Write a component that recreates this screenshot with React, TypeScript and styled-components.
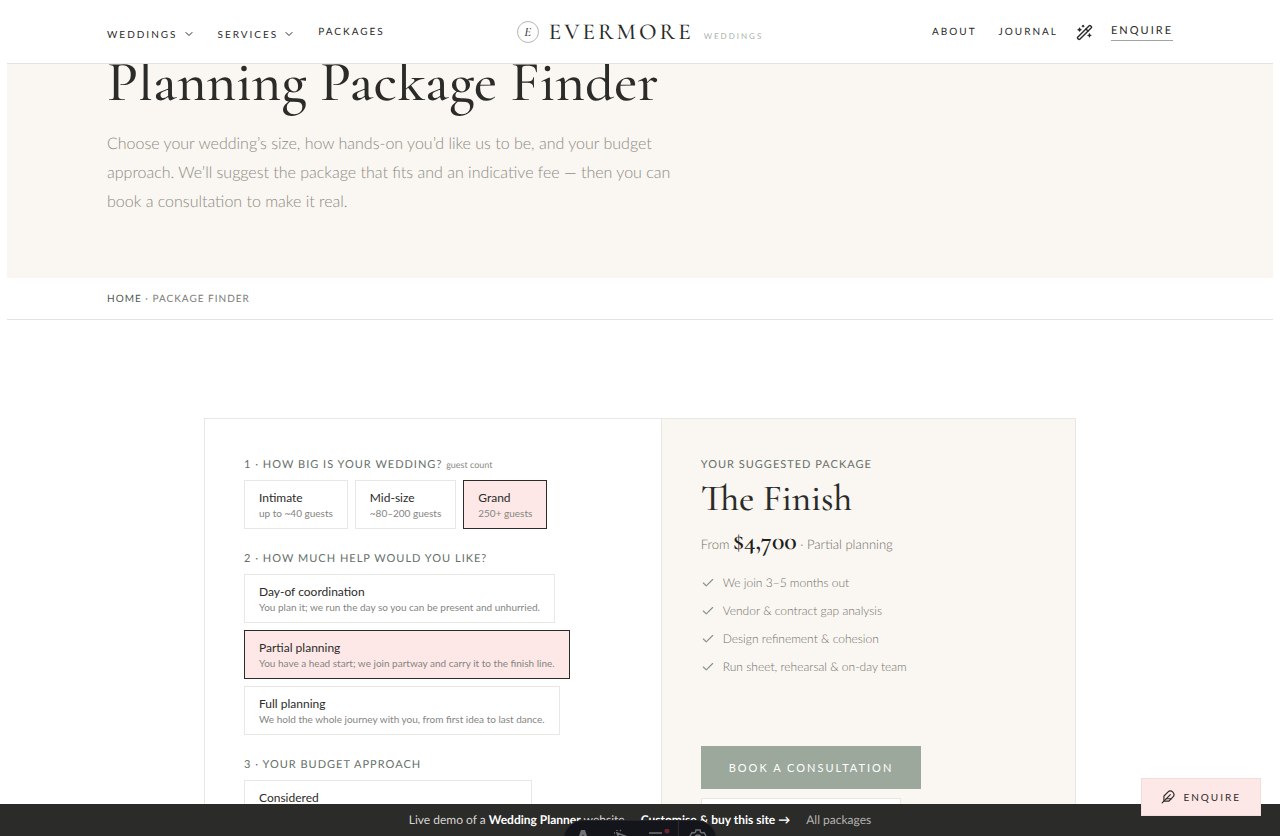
import React, { useState } from "react";
import styled, { createGlobalStyle } from "styled-components";
import { Check, ChevronDown, Feather, WandSparkles } from "lucide-react";

const ink = "#2b2b29";
const muted = "#8b8b84";
const cream = "#faf6f1";
const blush = "#fde8e7";
const sage = "#9ca89c";
const line = "#e9e7e3";
const serif = `"Cormorant Garamond", "Liberation Serif", serif`;

const GlobalStyle = createGlobalStyle`
  *, *::before, *::after { box-sizing: border-box; }
  body {
    margin: 0;
    background: #fff;
    color: ${ink};
    font-family: Lato, "Liberation Sans", sans-serif;
    font-size: 13px;
    text-rendering: geometricPrecision;
  }
  button { font: inherit; color: inherit; cursor: pointer; }
  a { color: inherit; text-decoration: none; }
  h1, h2, p, ul { margin: 0; padding: 0; }
`;

const Page = styled.div`
  height: 100vh;
  overflow: hidden;
  padding: 0 7px;
`;

const Header = styled.header`
  position: fixed;
  z-index: 10;
  top: 0;
  left: 7px;
  right: 7px;
  height: 64px;
  padding: 0 100px;
  display: grid;
  grid-template-columns: 1fr auto 1fr;
  align-items: center;
  background: #fff;
  border-bottom: 1px solid #e3e3e1;
`;

const Nav = styled.nav<{ $end?: boolean }>`
  display: flex;
  align-items: center;
  justify-content: ${(p) => (p.$end ? "flex-end" : "flex-start")};
  gap: ${(p) => (p.$end ? 18 : 23)}px;
  padding-top: 1px;
  font-size: 10px;
  line-height: 16px;
  letter-spacing: 2px;
`;

const MenuButton = styled.button`
  display: flex;
  align-items: center;
  gap: 5px;
  padding: 3px 0 0;
  border: 0;
  background: none;
  letter-spacing: inherit;
`;

const NavLink = styled.a`
  & + & {
    margin-left: 4px;
  }
`;

const IconButton = styled.button`
  display: flex;
  padding: 0;
  border: 0;
  background: none;
`;

const EnquireLink = styled.a`
  border-bottom: 1px solid ${sage};
  padding-bottom: 1px;
  font-size: 11px;
`;

const Brand = styled.a`
  display: flex;
  align-items: center;
  gap: 10px;
`;

const Monogram = styled.span`
  display: grid;
  place-items: center;
  width: 22px;
  height: 22px;
  border: 1px solid #b5b8b3;
  border-radius: 50%;
  font: italic 500 13px/20px ${serif};
`;

const Wordmark = styled.span`
  font: 500 23px/28px ${serif};
  letter-spacing: 3px;
`;

const BrandTag = styled.span`
  padding-top: 8px;
  font-size: 8px;
  letter-spacing: 2px;
  color: #a9b3ab;
`;

const Hero = styled.section`
  height: 278px;
  padding: 51px 100px 0;
  background: ${cream};
`;

const Title = styled.h1`
  font: 500 57px/64px ${serif};
`;

const Intro = styled.p`
  max-width: 580px;
  margin-top: 14px;
  font-size: 16px;
  line-height: 29px;
  font-weight: 300;
  color: ${muted};
`;

const Breadcrumb = styled.nav`
  padding: 2px 100px 0;
  border-bottom: 1px solid #e3e3e1;
  font-size: 10px;
  line-height: 39px;
  letter-spacing: 1px;
  color: #7b7d77;
  text-transform: uppercase;

  a {
    color: #4f5a52;
  }
`;

const Finder = styled.main`
  width: calc(100% - 48px);
  max-width: 872px;
  margin: 98px auto 0;
  display: grid;
  grid-template-columns: 11fr 10fr;
  border: 1px solid ${line};
`;

const Questions = styled.div`
  padding: 37px 39px;
`;

const Question = styled.section`
  margin-bottom: 21px;
`;

const Label = styled.h2`
  margin-bottom: 6px;
  font-size: 11px;
  font-weight: 400;
  line-height: 18px;
  letter-spacing: 1px;
  color: #66706a;

  small {
    font-size: 9px;
    letter-spacing: 0;
    color: ${muted};
  }
`;

const Options = styled.div<{ $column?: boolean }>`
  display: flex;
  flex-direction: ${(p) => (p.$column ? "column" : "row")};
  align-items: flex-start;
  gap: 7px;
`;

const Option = styled.button<{ $minWidth?: number }>`
  display: flex;
  flex-direction: column;
  min-width: ${(p) => p.$minWidth ?? 0}px;
  min-height: 49px;
  padding: 8px 14px;
  border: 1px solid ${line};
  background: #fff;
  text-align: left;
  white-space: nowrap;

  &[aria-pressed="true"] {
    border-color: ${ink};
    background: ${blush};
  }
`;

const OptionName = styled.span`
  font-size: 12px;
  line-height: 18px;
`;

const OptionNote = styled.span`
  font-size: 10px;
  line-height: 13px;
  color: #85857f;
`;

const Result = styled.aside`
  padding: 37px 39px;
  background: ${cream};
  border-left: 1px solid ${line};
`;

const ResultLabel = styled.p`
  font-size: 11px;
  line-height: 18px;
  letter-spacing: 1px;
  color: #66706a;
`;

const PackageName = styled.h2`
  margin-top: 4px;
  font: 500 37px/42px ${serif};
`;

const Price = styled.p`
  margin-top: 7px;
  font-size: 13px;
  line-height: 30px;
  font-weight: 300;
  color: #70706a;

  strong {
    font: 600 26px/30px ${serif};
    color: #1e1e1c;
  }
`;

const Features = styled.ul`
  margin-top: 10px;
  list-style: none;

  li {
    display: flex;
    align-items: center;
    gap: 8px;
    font-size: 12px;
    line-height: 28px;
    font-weight: 300;
    color: #70706a;
  }

  svg {
    color: #87948a;
  }
`;

const BookButton = styled.button`
  display: block;
  height: 43px;
  margin-top: 65px;
  padding: 0 28px;
  border: 0;
  background: ${sage};
  color: #fff;
  font-size: 11px;
  letter-spacing: 2px;
`;

const SecondaryLink = styled.a`
  display: block;
  width: 200px;
  height: 43px;
  margin-top: 9px;
  border: 1px solid ${line};
  background: #fff;
`;

const DemoBar = styled.footer`
  position: fixed;
  z-index: 10;
  left: 0;
  right: 0;
  bottom: 0;
  display: flex;
  justify-content: center;
  gap: 16px;
  background: ${ink};
  color: #d6d4d0;
  font-size: 12px;
  line-height: 32px;

  strong,
  a:first-of-type {
    font-weight: 700;
    color: #fff;
  }

  a:last-of-type {
    color: #b3b2ae;
  }
`;

const FloatingEnquire = styled.button`
  position: fixed;
  z-index: 20;
  right: 19px;
  bottom: 20px;
  display: flex;
  align-items: center;
  gap: 8px;
  height: 38px;
  padding: 0 19px;
  border: 1px solid #f3dcda;
  background: ${blush};
  font-size: 10px;
  letter-spacing: 2px;
`;

const DevToolbar = styled.div`
  position: fixed;
  z-index: 30;
  left: 50%;
  bottom: -24px;
  transform: translateX(-50%);
  display: flex;
  height: 40px;
  overflow: hidden;
  border: 1px solid #23252c;
  border-radius: 20px;
  background: #13151a;
  color: #6f7177;
`;

const ToolButton = styled.button`
  display: flex;
  justify-content: center;
  width: 38px;
  padding: 8px 0 0;
  border: 0;
  background: none;

  &:last-child {
    border-left: 1px solid #2b2d34;
  }
`;

type Choice = { name: string; note?: string; minWidth?: number };

const sizes: Choice[] = [
  { name: "Intimate", note: "up to ~40 guests" },
  { name: "Mid-size", note: "~80–200 guests" },
  { name: "Grand", note: "250+ guests" },
];

const help: Choice[] = [
  {
    name: "Day-of coordination",
    note: "You plan it; we run the day so you can be present and unhurried.",
  },
  {
    name: "Partial planning",
    note: "You have a head start; we join partway and carry it to the finish line.",
  },
  {
    name: "Full planning",
    note: "We hold the whole journey with you, from first idea to last dance.",
  },
];

const budgets: Choice[] = [{ name: "Considered", minWidth: 288 }];

const features = [
  "We join 3–5 months out",
  "Vendor & contract gap analysis",
  "Design refinement & cohesion",
  "Run sheet, rehearsal & on-day team",
];

function ChoiceGroup({
  choices,
  initial,
  column,
}: {
  choices: Choice[];
  initial: string;
  column?: boolean;
}) {
  const [value, setValue] = useState(initial);
  return (
    <Options $column={column}>
      {choices.map((c) => (
        <Option
          key={c.name}
          type="button"
          $minWidth={c.minWidth}
          aria-pressed={value === c.name}
          onClick={() => setValue(c.name)}
        >
          <OptionName>{c.name}</OptionName>
          {c.note && <OptionNote>{c.note}</OptionNote>}
        </Option>
      ))}
    </Options>
  );
}

export default function App() {
  return (
    <Page>
      <GlobalStyle />
      <Header>
        <Nav>
          <MenuButton type="button">
            WEDDINGS <ChevronDown size={12} strokeWidth={2} />
          </MenuButton>
          <MenuButton type="button">
            SERVICES <ChevronDown size={12} strokeWidth={2} />
          </MenuButton>
          <NavLink href="#packages">PACKAGES</NavLink>
        </Nav>
        <Brand href="#home">
          <Monogram>E</Monogram>
          <Wordmark>EVERMORE</Wordmark>
          <BrandTag>WEDDINGS</BrandTag>
        </Brand>
        <Nav $end>
          <NavLink href="#about">ABOUT</NavLink>
          <NavLink href="#journal">JOURNAL</NavLink>
          <IconButton type="button" aria-label="Style">
            <WandSparkles size={17} />
          </IconButton>
          <EnquireLink href="#enquire">ENQUIRE</EnquireLink>
        </Nav>
      </Header>

      <Hero>
        <Title>Planning Package Finder</Title>
        <Intro>
          Choose your wedding’s size, how hands-on you’d like us to be, and your
          budget approach. We’ll suggest the package that fits and an indicative
          fee — then you can book a consultation to make it real.
        </Intro>
      </Hero>

      <Breadcrumb aria-label="Breadcrumb">
        <a href="#home">Home</a> · Package Finder
      </Breadcrumb>

      <Finder>
        <Questions>
          <Question>
            <Label>
              1 · HOW BIG IS YOUR WEDDING? <small>guest count</small>
            </Label>
            <ChoiceGroup choices={sizes} initial="Grand" />
          </Question>
          <Question>
            <Label>2 · HOW MUCH HELP WOULD YOU LIKE?</Label>
            <ChoiceGroup choices={help} initial="Partial planning" column />
          </Question>
          <Question>
            <Label>3 · YOUR BUDGET APPROACH</Label>
            <ChoiceGroup choices={budgets} initial="" column />
          </Question>
        </Questions>
        <Result>
          <ResultLabel>YOUR SUGGESTED PACKAGE</ResultLabel>
          <PackageName>The Finish</PackageName>
          <Price>
            From <strong>$4,700</strong> · Partial planning
          </Price>
          <Features>
            {features.map((f) => (
              <li key={f}>
                <Check size={14} strokeWidth={2} />
                {f}
              </li>
            ))}
          </Features>
          <BookButton type="button">BOOK A CONSULTATION</BookButton>
          <SecondaryLink href="#packages" aria-label="All packages" />
        </Result>
      </Finder>

      <DemoBar>
        <span>
          Live demo of a <strong>Wedding Planner</strong> website
        </span>
        <a href="#buy">Customise &amp; buy this site →</a>
        <a href="#all">All packages</a>
      </DemoBar>

      <FloatingEnquire type="button">
        <Feather size={14} /> ENQUIRE
      </FloatingEnquire>

      <DevToolbar>
        <ToolButton type="button" aria-label="Menu">
          <svg width="16" height="20" viewBox="0 0 16 20" fill="currentColor">
            <path d="M6 1h4l5 15c-2-1-3-1-4-1.300L8 5 5 14.700C4 15 3 15 1 16z" />
            <path d="M5 16c2 1 4 1 6 0 0 2-2 2-3 4-1-2-3-2-3-4z" />
          </svg>
        </ToolButton>
        <ToolButton type="button" aria-label="Inspect">
          <svg width="18" height="18" viewBox="0 0 18 18" fill="none" stroke="currentColor" strokeWidth="1.500">
            <path d="M5 4l11 4-5 2-2 5zM5 1v1M9 1l-1 1M2 4h1M2 8l1-1" />
          </svg>
        </ToolButton>
        <ToolButton type="button" aria-label="Audit">
          <svg width="22" height="18" viewBox="0 0 22 18" fill="none" stroke="currentColor" strokeWidth="1.500">
            <path d="M1 4h13M1 9h14M1 14h14" />
            <circle cx="19" cy="2" r="2.500" fill="#6a2430" stroke="none" />
          </svg>
        </ToolButton>
        <ToolButton type="button" aria-label="Settings">
          <svg width="18" height="18" viewBox="0 0 18 18" fill="none" stroke="currentColor" strokeWidth="1.500">
            <path d="M7 1h4l.5 2 1.500 1 2-.5 2 3.500-1.500 1.500v1L17 11l-2 3.500-2-.5-1.500 1-.5 2H7l-.5-2L5 14l-2 .5L1 11l1.500-1.500v-1L1 7l2-3.500 2 .5 1.500-1z" />
            <circle cx="9" cy="9" r="3" />
          </svg>
        </ToolButton>
      </DevToolbar>
    </Page>
  );
}
